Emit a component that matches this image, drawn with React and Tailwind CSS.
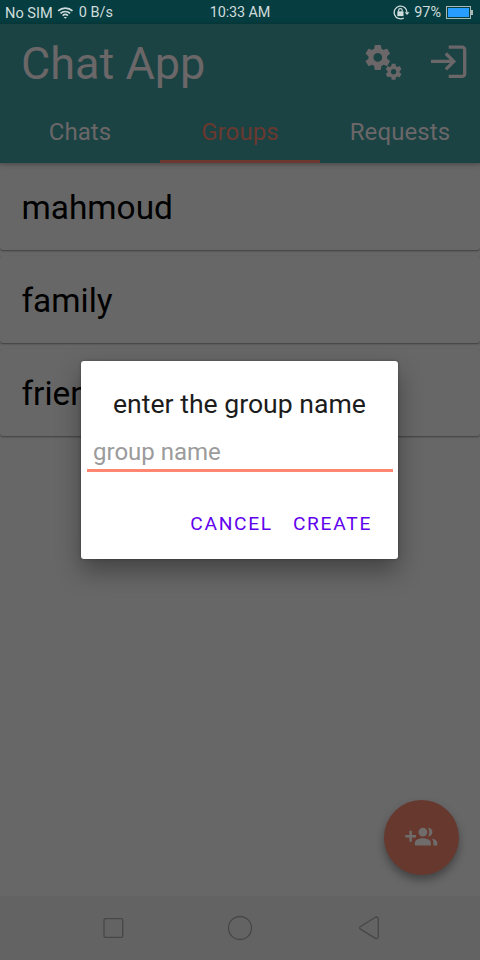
import React from 'react';

const GEAR =
  'M19.43 12.98c.04-.32.07-.64.07-.98s-.03-.66-.07-.98l2.11-1.65c.19-.15.24-.42.12-.64l-2-3.46c-.12-.22-.39-.3-.61-.22l-2.49 1c-.52-.4-1.08-.73-1.69-.98l-.38-2.65C14.46 2.18 14.25 2 14 2h-4c-.25 0-.46.18-.49.42l-.38 2.65c-.61.25-1.17.59-1.69.98l-2.49-1c-.23-.09-.49 0-.61.22l-2 3.46c-.13.22-.07.49.12.64l2.11 1.65c-.04.32-.07.65-.07.98s.03.66.07.98l-2.11 1.65c-.19.15-.24.42-.12.64l2 3.46c.12.22.39.3.61.22l2.49-1c.52.4 1.08.73 1.69.98l.38 2.65c.03.24.24.42.49.42h4c.25 0 .46-.18.49-.42l.38-2.65c.61-.25 1.17-.59 1.69-.98l2.49 1c.23.09.49 0 .61-.22l2-3.46c.12-.22.07-.49-.12-.64l-2.11-1.65zM12 15.5c-1.93 0-3.5-1.57-3.5-3.5s1.57-3.5 3.5-3.5 3.5 1.57 3.5 3.5-1.57 3.5-3.5 3.5z';

function StatusBar() {
  return (
    <div className="grid h-6 grid-cols-3 items-center bg-[#063d40] text-[14px] leading-6 text-[#cfdcdc]">
      <div className="flex items-center pl-[5px]">
        <span className="text-[14.6px]">No SIM</span>
        <svg className="ml-[4px]" width="17" height="14" viewBox="0 0 18 14" fill="none" stroke="currentColor" strokeWidth="1.8">
          <path d="M1.2 4.8a11.2 11.2 0 0 1 15.2 0M3.7 7.4a7.5 7.5 0 0 1 10.2 0M6 9.8a4.2 4.2 0 0 1 5.6 0" />
          <path d="M7 11.2h3.6l-1.8 2z" fill="currentColor" stroke="none" />
        </svg>
        <span className="ml-[5px] text-[14.5px]">0 B/s</span>
      </div>
      <div className="pt-[1px] text-center text-[14.4px] tracking-[-0.1px]">10:33 AM</div>
      <div className="flex items-center justify-end pr-[7px]">
        <svg className="mr-[4px]" width="17" height="15" viewBox="0 0 17 15" fill="none">
          <path d="M10.8 13A6.4 6.4 0 1 1 14 7.4" stroke="currentColor" strokeWidth="1.3" />
          <path d="M11.6 7.2h4.9L14 10.1z" fill="currentColor" />
          <rect x="4.3" y="6.3" width="6.2" height="4.8" fill="currentColor" />
          <path d="M5.6 6.5V5.4a1.8 1.8 0 0 1 3.6 0v1.1" stroke="currentColor" strokeWidth="1.2" />
        </svg>
        <span className="mr-[5px] text-[14.4px]">97%</span>
        <div className="h-[13px] w-[25px] border border-[#a9b9b4] bg-[#063d40] p-px">
          <div className="h-full w-[21px] bg-[#279dff]" />
        </div>
        <div className="h-[5px] w-[2px] bg-[#a9b9b4]" />
      </div>
    </div>
  );
}

function Header() {
  return (
    <header className="relative h-[139px] bg-[#1b4344] text-[#6b6768] shadow-[0_1px_5px_rgba(0,0,0,0.35)]">
      <div className="flex h-[76px] items-center pl-[21px] pr-[12px]">
        <h1 className="flex-1 pt-[4px] text-[45px] leading-[52px]">Chat App</h1>
        <svg className="mr-[29px]" width="37" height="37" viewBox="0 0 37 37" fill="currentColor">
          <path transform="translate(-2.2 -1.6) scale(1.25)" d={GEAR} />
          <path transform="translate(19 18.1) scale(0.8)" d={GEAR} />
        </svg>
        <svg width="37" height="36" viewBox="0 0 37 36" fill="none" stroke="currentColor" strokeWidth="3.3">
          <path d="M17.7 3.2h13.4a2.6 2.6 0 0 1 2.6 2.6v24a2.6 2.6 0 0 1-2.6 2.6H17.7" />
          <path d="M0 17.4h22M14.8 9.5l8 7.9-8 7.9" />
        </svg>
      </div>
      <nav className="grid h-[63px] grid-cols-3 text-center text-[24px] leading-8 tracking-[0.1px]">
        <span className="pt-4">Chats</span>
        <span className="border-b-[3px] border-[#6b382f] pt-4 text-[#6b382f]">Groups</span>
        <span className="pt-4">Requests</span>
      </nav>
    </header>
  );
}

function GroupRow({ name }) {
  return (
    <li className="flex h-[87px] items-center rounded-[3px] bg-[#676767] pl-[21.5px] pt-[3px] text-[33.4px] leading-10 text-black shadow-[0_1px_2px_rgba(0,0,0,0.4)]">
      {name}
    </li>
  );
}

function GroupDialog() {
  return (
    <section className="absolute left-[81px] top-[361px] flex h-[198px] w-[317px] flex-col rounded-[3px] bg-white shadow-[0_12px_24px_rgba(0,0,0,0.35),0_0_3px_rgba(0,0,0,0.3)]">
      <h2 className="pl-8 pt-[27px] text-[26.6px] leading-8 text-[#1c1c1c]">enter the group name</h2>
      <div className="ml-[6px] mr-[5px] mt-[14px] h-[38px] border-b-[3px] border-[#ff8670] pl-[6px] pt-[2px] text-[24px] leading-8 text-[#9b9b9b]">
        group name
      </div>
      <div className="mt-[40px] flex justify-end gap-[20px] pr-[26px] text-[19.2px] leading-6 tracking-[1.7px] text-[#6100ed]">
        <button>CANCEL</button>
        <button>CREATE</button>
      </div>
    </section>
  );
}

function AddGroupButton() {
  return (
    <button className="absolute left-[384px] top-[800px] flex h-[75px] w-[75px] items-center justify-center rounded-full bg-[#67382e] text-[#6f6c6b] shadow-[0_5px_9px_rgba(0,0,0,0.35)]">
      <svg className="mt-[-2px]" width="33" height="22" viewBox="0 0 33 22" fill="currentColor">
        <path d="M4.4 4.8h2.5v4.2h4.1v2.5H6.9v4.3H4.4v-4.3H.2V9h4.2z" />
        <circle cx="17.9" cy="6.1" r="4.4" />
        <path d="M9.9 19.5v-2.8c0-2.9 4.5-4.4 8-4.4s8 1.5 8 4.4v2.8z" />
        <path d="M23 1.7a4.4 4.4 0 1 1 0 8.8c1.7-2.3 1.7-6.5 0-8.8zM26.7 12.5c2.8.5 5.6 1.9 5.6 4.2v2.8h-4v-2.8c0-1.7-.5-3.1-1.6-4.2z" />
      </svg>
    </button>
  );
}

function NavigationBar() {
  return (
    <footer className="h-16 bg-[#636363] text-[#474747]">
      <svg width="480" height="64" viewBox="0 0 480 64" fill="none" stroke="currentColor" strokeWidth="1.3">
        <rect x="104" y="22.7" width="18.7" height="18.7" rx="1.5" />
        <circle cx="240" cy="32" r="11.5" />
        <path d="M360.5 30.5l14.5-9c1.8-1 3.3-.5 3.3 1.5v17.5c0 2-1.5 2.7-3.3 1.6l-14.5-9c-1.4-.9-1.4-1.7 0-2.6z" />
      </svg>
    </footer>
  );
}

export default function App() {
  return (
    <main className="relative flex h-[960px] w-[480px] flex-col overflow-hidden bg-[#676767] font-['Roboto',sans-serif]">
      <StatusBar />
      <Header />
      <ul className="flex flex-1 flex-col gap-[6px]">
        <GroupRow name="mahmoud" />
        <GroupRow name="family" />
        <GroupRow name="friends" />
      </ul>
      <NavigationBar />
      <AddGroupButton />
      <GroupDialog />
    </main>
  );
}
